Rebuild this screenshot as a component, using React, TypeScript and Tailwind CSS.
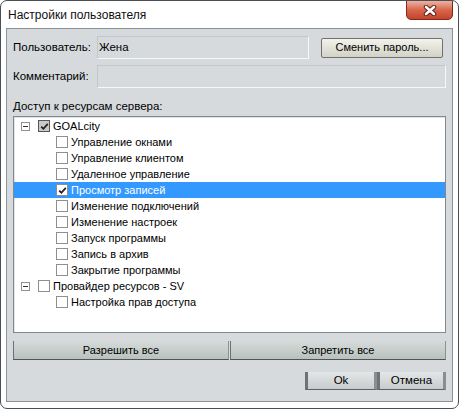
import React from "react";

const font = { fontFamily: '"Liberation Sans", Arial, sans-serif' };

function CloseGlyph() {
  return (
    <svg width="14" height="11" viewBox="0 0 14 11">
      <path d="M3 2 L11 9 M11 2 L3 9" stroke="#5a1a12" strokeWidth="4.4" strokeLinecap="round" />
      <path d="M3 2 L11 9 M11 2 L3 9" stroke="#ffffff" strokeWidth="2.6" strokeLinecap="round" />
    </svg>
  );
}

function Check({ color = "#222" }: { color?: string }) {
  return (
    <svg width="9" height="9" viewBox="0 0 9 9" className="block">
      <path d="M1.2 4.6 L3.4 6.8 L7.8 1.8" stroke={color} strokeWidth="1.8" fill="none" />
    </svg>
  );
}

function Box({ checked, root }: { checked?: boolean; root?: boolean }) {
  return (
    <span
      className={
        "flex items-center justify-center w-[12px] h-[12px] border " +
        (root ? "bg-[#c9c9c9] border-[#555]" : "bg-white border-[#8f8f8f]")
      }
    >
      {checked ? <Check /> : null}
    </span>
  );
}

function Expander() {
  return (
    <span className="flex items-center justify-center w-[9px] h-[9px] border border-[#919191] bg-white">
      <span className="block w-[5px] h-[1px] bg-[#333]" />
    </span>
  );
}

type Row = { label: string; level: 0 | 1; checked?: boolean; selected?: boolean; root?: boolean };

const rows: Row[] = [
  { label: "GOALcity", level: 0, checked: true, root: true },
  { label: "Управление окнами", level: 1 },
  { label: "Управление клиентом", level: 1 },
  { label: "Удаленное управление", level: 1 },
  { label: "Просмотр записей", level: 1, checked: true, selected: true },
  { label: "Изменение подключений", level: 1 },
  { label: "Изменение настроек", level: 1 },
  { label: "Запуск программы", level: 1 },
  { label: "Запись в архив", level: 1 },
  { label: "Закрытие программы", level: 1 },
  { label: "Провайдер ресурсов - SV", level: 0 },
  { label: "Настройка прав доступа", level: 1 },
];

function TreeRow({ r }: { r: Row }) {
  return (
    <div
      className={
        "flex items-center h-[16px] text-[11px] leading-[16px] " +
        (r.selected ? "bg-[#3399ff] text-white" : "text-black")
      }
    >
      {r.level === 0 ? (
        <>
          <span className="ml-[7px] w-[9px]">
            <Expander />
          </span>
          <span className="ml-[8px]">
            <Box checked={r.checked} root={r.root} />
          </span>
          <span className="ml-[3px]">{r.label}</span>
        </>
      ) : (
        <>
          <span className="ml-[42px]">
            <Box checked={r.checked} />
          </span>
          <span className="ml-[3px]">{r.label}</span>
        </>
      )}
    </div>
  );
}

function Field({ children, className = "" }: { children?: React.ReactNode; className?: string }) {
  return (
    <div
      className={
        "h-[23px] flex items-center pl-[1px] text-[11.5px] text-black bg-[#d6dadd] border border-t-[#c3c7cb] border-l-[#c3c7cb] border-r-[#f6f7f8] border-b-[#f6f7f8] " +
        className
      }
    >
      {children}
    </div>
  );
}

function FlatButton({ children, className = "" }: { children: React.ReactNode; className?: string }) {
  return (
    <div
      className={
        "h-[19px] flex items-center justify-center text-[11px] text-black bg-gradient-to-b from-[#d5dbd9] to-[#b9c1bf] border-l border-l-[#6d7270] border-b border-b-[#4f5352] border-r border-r-[#8e9391] " +
        className
      }
    >
      {children}
    </div>
  );
}

function DlgButton({ children, className = "" }: { children: React.ReactNode; className?: string }) {
  return (
    <div
      className={
        "h-[18px] flex items-center justify-center text-[11.5px] text-black bg-gradient-to-b from-[#e3e6e6] to-[#c7cccc] border-l-[3px] border-l-[#6f7375] border-r-[3px] border-r-[#8a8e90] border-b border-b-[#5d6163] " +
        className
      }
    >
      {children}
    </div>
  );
}

export default function App() {
  return (
    <div className="w-[460px] h-[409px] bg-white" style={font}>
      <div className="w-[459px] h-[409px] rounded-[7px] border border-[#4a4f55] bg-white flex flex-col overflow-hidden">
        {/* title bar */}
        <div className="h-[27px] flex items-start relative">
          <span className="ml-[7px] mt-[6px] text-[12px] leading-[16px] text-[#111]">Настройки пользователя</span>
          <div className="absolute right-[5px] top-[-1px] w-[47px] h-[20px] rounded-b-[5px] border border-[#7a2a1e] bg-gradient-to-b from-[#eab2a2] via-[#d8654a] to-[#c4442a] flex items-center justify-center">
            <CloseGlyph />
          </div>
        </div>

        {/* client area */}
        <div className="mx-[5px] h-[374px] border border-[#8b9399] bg-[#d6dadd] flex flex-col px-[6px]">
          <div className="mt-[7px] flex items-center">
            <span className="w-[84px] text-[11.5px] text-black">Пользователь:</span>
            <Field className="w-[212px]">Жена</Field>
            <div className="ml-[12px] w-[122px] h-[20px] rounded-[2px] border border-[#707070] bg-gradient-to-b from-[#f3f3ec] to-[#d2d2c6] flex items-center justify-center text-[11px] text-black">
              Сменить пароль...
            </div>
          </div>

          <div className="mt-[6px] flex items-center">
            <span className="w-[84px] text-[11.5px] text-black">Комментарий:</span>
            <Field className="flex-1" />
          </div>

          <div className="mt-[10px] h-[16px] text-[11.5px] leading-[16px] text-black">Доступ к ресурсам сервера:</div>

          <div className="mt-[2px] h-[217px] border border-[#828790] bg-white pt-[1px] shadow-[inset_1px_1px_0_#e2e2e2]">
            {rows.map((r) => (
              <TreeRow key={r.label} r={r} />
            ))}
          </div>

          <div className="mt-[8px] flex gap-[1px]">
            <FlatButton className="w-[216px]">Разрешить все</FlatButton>
            <FlatButton className="flex-1">Запретить все</FlatButton>
          </div>

          <div className="mt-[12px] flex justify-end">
            <DlgButton className="w-[72px]">Ok</DlgButton>
            <DlgButton className="w-[69px]">Отмена</DlgButton>
          </div>
        </div>
      </div>
    </div>
  );
}
